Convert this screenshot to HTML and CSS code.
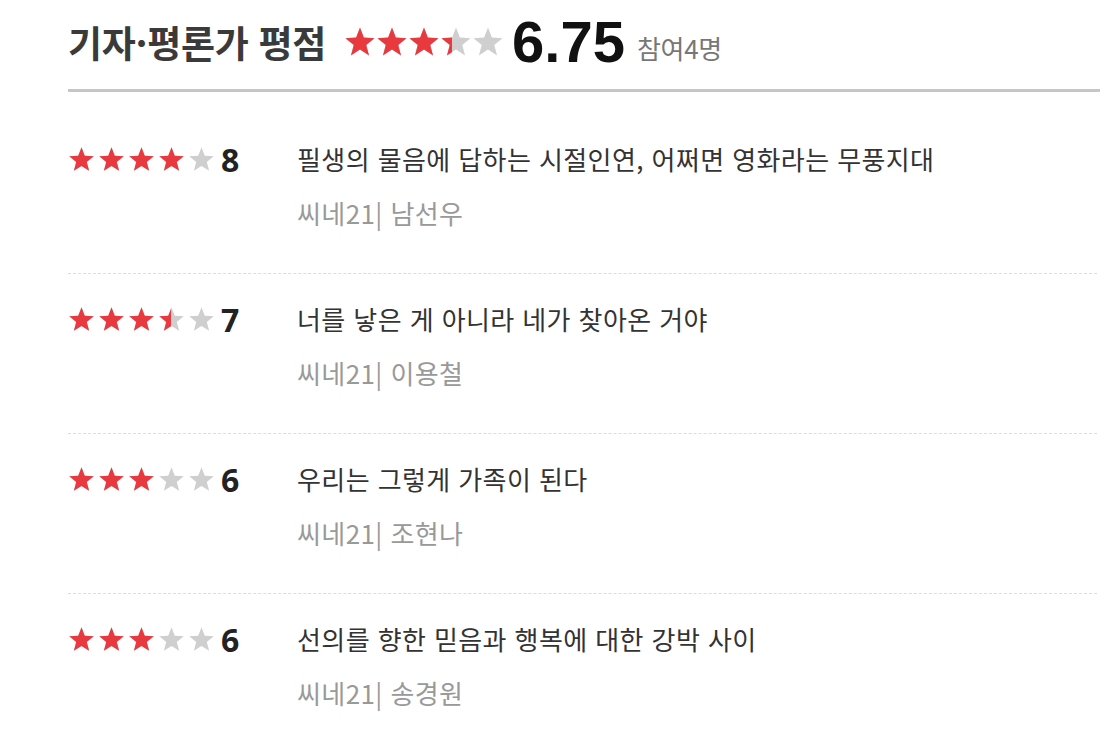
FILE: index.html
```html
<!DOCTYPE html>
<html lang="ko">

<head>
  <meta charset="UTF-8" />
  <title>기자·평론가 평점</title>
  <link rel="stylesheet" href="styles.css">
</head>

<body>

  <svg class="defs" width="0" height="0">
    <symbol id="star" viewBox="0 0 24 24">
      <polygon points="12,1.2 14.9,8.6 22.9,9.1 16.7,14.2 18.8,22.1 12,17.7 5.2,22.1 7.3,14.2 1.1,9.1 9.1,8.6" />
    </symbol>
  </svg>

  <div class="score-box">

    <div class="score-head">
      <h2>기자·평론가 평점</h2>
      <div class="stars big">
        <div class="stars-row off"><svg><use href="#star"/></svg><svg><use href="#star"/></svg><svg><use href="#star"/></svg><svg><use href="#star"/></svg><svg><use href="#star"/></svg></div>
        <div class="stars-row on" style="width: 67.5%"><svg><use href="#star"/></svg><svg><use href="#star"/></svg><svg><use href="#star"/></svg><svg><use href="#star"/></svg><svg><use href="#star"/></svg></div>
      </div>
      <span class="avg">6.75</span>
      <span class="count">참여4명</span>
    </div>

    <ul class="reviews">
      <li class="review">
        <div class="rating">
          <div class="stars">
            <div class="stars-row off"><svg><use href="#star"/></svg><svg><use href="#star"/></svg><svg><use href="#star"/></svg><svg><use href="#star"/></svg><svg><use href="#star"/></svg></div>
            <div class="stars-row on" style="width: 80%"><svg><use href="#star"/></svg><svg><use href="#star"/></svg><svg><use href="#star"/></svg><svg><use href="#star"/></svg><svg><use href="#star"/></svg></div>
          </div>
          <span class="num">8</span>
        </div>
        <div class="body">
          <p class="title">필생의 물음에 답하는 시절인연, 어쩌면 영화라는 무풍지대</p>
          <p class="author">씨네21| 남선우</p>
        </div>
      </li>
      <li class="review">
        <div class="rating">
          <div class="stars">
            <div class="stars-row off"><svg><use href="#star"/></svg><svg><use href="#star"/></svg><svg><use href="#star"/></svg><svg><use href="#star"/></svg><svg><use href="#star"/></svg></div>
            <div class="stars-row on" style="width: 70%"><svg><use href="#star"/></svg><svg><use href="#star"/></svg><svg><use href="#star"/></svg><svg><use href="#star"/></svg><svg><use href="#star"/></svg></div>
          </div>
          <span class="num">7</span>
        </div>
        <div class="body">
          <p class="title">너를 낳은 게 아니라 네가 찾아온 거야</p>
          <p class="author">씨네21| 이용철</p>
        </div>
      </li>
      <li class="review">
        <div class="rating">
          <div class="stars">
            <div class="stars-row off"><svg><use href="#star"/></svg><svg><use href="#star"/></svg><svg><use href="#star"/></svg><svg><use href="#star"/></svg><svg><use href="#star"/></svg></div>
            <div class="stars-row on" style="width: 60%"><svg><use href="#star"/></svg><svg><use href="#star"/></svg><svg><use href="#star"/></svg><svg><use href="#star"/></svg><svg><use href="#star"/></svg></div>
          </div>
          <span class="num">6</span>
        </div>
        <div class="body">
          <p class="title">우리는 그렇게 가족이 된다</p>
          <p class="author">씨네21| 조현나</p>
        </div>
      </li>
      <li class="review">
        <div class="rating">
          <div class="stars">
            <div class="stars-row off"><svg><use href="#star"/></svg><svg><use href="#star"/></svg><svg><use href="#star"/></svg><svg><use href="#star"/></svg><svg><use href="#star"/></svg></div>
            <div class="stars-row on" style="width: 60%"><svg><use href="#star"/></svg><svg><use href="#star"/></svg><svg><use href="#star"/></svg><svg><use href="#star"/></svg><svg><use href="#star"/></svg></div>
          </div>
          <span class="num">6</span>
        </div>
        <div class="body">
          <p class="title">선의를 향한 믿음과 행복에 대한 강박 사이</p>
          <p class="author">씨네21| 송경원</p>
        </div>
      </li>
    </ul>

  </div>

</body>
</html>
```

FILE: styles.css
```css
:root {
  --red: #e8393e;
  --star-off: #cfcfcf;
  --text: #333333;
  --sub: #999999;
}

* {
  margin: 0;
  padding: 0;
  box-sizing: border-box;
}

body {
  background: #ffffff;
  font-family: 'Noto Sans CJK KR', 'Noto Sans', sans-serif;
  color: var(--text);
  overflow: hidden;
}

.defs {
  position: absolute;
  width: 0;
  height: 0;
}

.score-box {
  padding-left: 68px;
}

/* header */

.score-head {
  height: 92px;
  display: flex;
  align-items: center;
  padding-bottom: 6px;
  border-bottom: 3px solid #c6c6c6;
}

.score-head h2 {
  font-size: 37px;
  font-weight: 700;
  letter-spacing: -0.3px;
  color: #3a3a3a;
  margin-right: 18px;
}

.avg {
  font-family: 'Liberation Sans', Arial, sans-serif;
  font-size: 58px;
  font-weight: 700;
  color: #111111;
  margin-left: 8px;
  margin-right: 12px;
}

.count {
  font-size: 26px;
  letter-spacing: -0.3px;
  color: #777777;
  margin-top: 12px;
}

/* stars */

.stars {
  position: relative;
  width: 147px;
  height: 27px;
}

.stars-row {
  display: flex;
  gap: 3px;
  height: 100%;
  overflow: hidden;
  white-space: nowrap;
}

.stars-row svg {
  flex: 0 0 27px;
  width: 27px;
  height: 27px;
}

.stars-row.off {
  fill: var(--star-off);
}

.stars-row.on {
  position: absolute;
  top: 0;
  left: 0;
  fill: var(--red);
}

.stars.big {
  width: 160px;
  height: 32px;
}

.stars.big .stars-row {
  gap: 0;
}

.stars.big .stars-row svg {
  flex-basis: 32px;
  width: 32px;
  height: 32px;
}

/* reviews */

.reviews {
  list-style: none;
  margin-top: 22px;
}

.review {
  display: flex;
  padding: 27px 0 42px;
  border-bottom: 1px dashed #dcdcdc;
  margin-right: 3px;
}

.review:last-child {
  border-bottom: none;
}

.rating {
  width: 229px;
  height: 36px;
  display: flex;
  align-items: center;
  gap: 6px;
}

.num {
  font-family: 'Open Sans', sans-serif;
  font-size: 32px;
  font-weight: 700;
  color: #222222;
}

.title {
  font-size: 26px;
  line-height: 36px;
  letter-spacing: 0.4px;
  color: var(--text);
}

.author {
  margin-top: 18px;
  font-size: 26px;
  line-height: 36px;
  letter-spacing: 0.4px;
  color: var(--sub);
}
```
